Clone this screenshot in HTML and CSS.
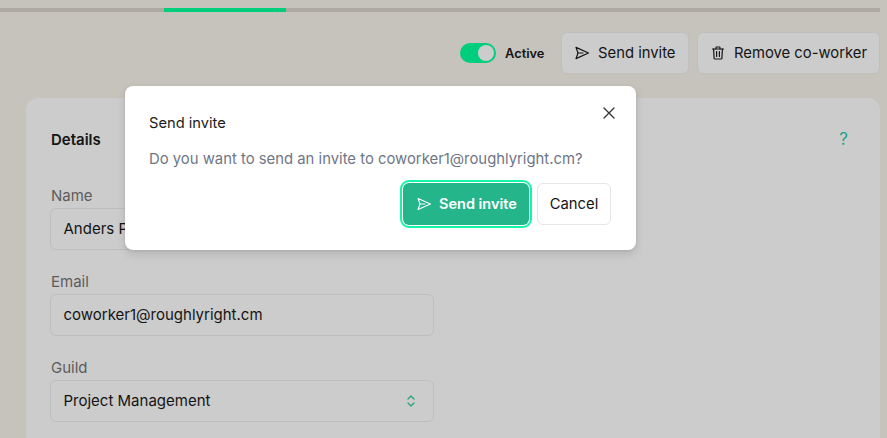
FILE: index.html
```html
<!DOCTYPE html>
<html lang="en">
<head>
<meta charset="utf-8">
<title>Co-worker</title>
<link rel="stylesheet" href="styles.css">
</head>
<body>
<main class="page">
  <div class="track"><div class="track-fill"></div></div>
  <div class="actions">
    <div class="toggle"><span class="knob"></span></div>
    <span class="toggle-label">Active</span>
    <button class="btn btn-send">
      <svg class="icon" viewBox="0 0 16 16" fill="none" stroke="currentColor" stroke-width="1.200" stroke-linejoin="round" stroke-linecap="round"><path d="M2 2.400 14.500 8 2 13.600 4 8Z"/><path d="M4 8H9"/></svg>
      Send invite
    </button>
    <button class="btn">
      <svg class="icon" viewBox="0 0 16 16" fill="none" stroke="currentColor" stroke-width="1.200" stroke-linejoin="round" stroke-linecap="round"><path d="M2.500 4H13.500"/><path d="M6 4V2.700C6 2.300 6.300 2 6.700 2H9.300C9.700 2 10 2.300 10 2.700V4"/><path d="M3.600 4 4.100 13.200C4.100 13.700 4.500 14 5 14H11C11.500 14 11.900 13.700 11.900 13.200L12.400 4"/><path d="M6.600 6.500V11.500M9.400 6.500V11.500"/></svg>
      Remove co-worker
    </button>
  </div>
  <section class="card">
    <div class="card-head">
      <h2 class="card-title">Details</h2>
      <span class="help">?</span>
    </div>
    <div class="field">
      <label class="label">Name</label>
      <div class="input">Anders Persson</div>
    </div>
    <div class="field">
      <label class="label">Email</label>
      <div class="input">coworker1@roughlyright.cm</div>
    </div>
    <div class="field">
      <label class="label">Guild</label>
      <div class="input select">
        Project Management
        <svg class="chevrons" viewBox="0 0 12 16" fill="none" stroke="currentColor" stroke-width="1.400" stroke-linecap="round" stroke-linejoin="round"><path d="M3 6 6 3 9 6"/><path d="M3 10 6 13 9 10"/></svg>
      </div>
    </div>
  </section>
</main>
<div class="dialog">
  <button class="close" aria-label="Close">
    <svg viewBox="0 0 14 14" fill="none" stroke="currentColor" stroke-width="1.300" stroke-linecap="round"><path d="M2 2 12 12M12 2 2 12"/></svg>
  </button>
  <h3 class="dialog-title">Send invite</h3>
  <p class="dialog-text">Do you want to send an invite to coworker1@roughlyright.cm?</p>
  <div class="dialog-actions">
    <button class="primary">
      <svg class="icon" viewBox="0 0 16 16" fill="none" stroke="currentColor" stroke-width="1.100" stroke-linejoin="round" stroke-linecap="round"><path d="M2 2.400 14.500 8 2 13.600 4 8Z"/><path d="M4 8H9"/></svg>
      Send invite
    </button>
    <button class="cancel">Cancel</button>
  </div>
</div>
</body>
</html>
```
FILE: styles.css
```css
* { box-sizing: border-box; }
html, body { margin: 0; height: 100%; }
body {
  background: #c6c3bc;
  font-family: Inter, "Liberation Sans", sans-serif;
  color: #141414;
  overflow: hidden;
  position: relative;
}
.page { padding: 8px 7px 0 0; }
.track { height: 4px; background: #aeaaa2; }
.track-fill { width: 122px; height: 4px; margin-left: 164px; background: #00ce7c; }
.actions {
  display: flex;
  align-items: center;
  justify-content: flex-end;
  margin-top: 20px;
  height: 42px;
}
.toggle {
  width: 36px;
  height: 20px;
  border-radius: 10px;
  background: #00ce7c;
  padding: 2px;
  display: flex;
  justify-content: flex-end;
}
.knob { width: 16px; height: 16px; border-radius: 50%; background: #cccccc; }
.toggle-label { width: 40px; font-size: 12.800px; font-weight: 600; margin: 0 16px 0 9px; white-space: nowrap; }
.btn {
  display: flex;
  align-items: center;
  gap: 8px;
  height: 42px;
  padding: 0 12px;
  margin-left: 8px;
  border: 1px solid #bfbfbf;
  border-radius: 6px;
  background: #cccccc;
  color: #141414;
  font: 14.800px/20px Inter, "Liberation Sans", sans-serif;
  white-space: nowrap;
}
.btn-send { width: 128px; margin-left: 0; }
.icon { width: 16px; height: 16px; flex: none; }
.card {
  margin: 24px 0 0 26px;
  padding: 30px 24px 0;
  background: #cccccc;
  border-radius: 12px 12px 0 0;
  height: 340px;
}
.card-head { display: flex; justify-content: space-between; align-items: center; height: 22px; }
.card-title { margin: 0; padding-left: 1px; font-size: 15px; font-weight: 600; }
.help { color: #23a088; font-size: 17px; margin-right: 8px; }
.field { width: 384px; margin-top: 22px; }
.card-head + .field { margin-top: 36px; }
.label { display: block; padding-left: 1px; font-size: 15px; line-height: 20px; color: #5c5c5c; margin-bottom: 2px; }
.input {
  height: 42px;
  border: 1px solid #bebebe;
  border-radius: 6px;
  padding: 0 12px 1px 12.500px;
  display: flex;
  align-items: center;
  justify-content: space-between;
  font-size: 15px;
  color: #141414;
}
.chevrons { width: 12px; height: 16px; color: #23a57f; margin-right: 4px; }
.dialog {
  position: absolute;
  left: 125px;
  top: 86px;
  width: 511px;
  height: 164px;
  background: #fff;
  border-radius: 8px;
  padding: 27px 25px 0 24px;
  box-shadow: 0 4px 10px rgba(0,0,0,.12), 0 1px 3px rgba(0,0,0,.08);
}
.close {
  position: absolute;
  right: 20px;
  top: 20px;
  width: 14px;
  height: 14px;
  padding: 0;
  border: 0;
  background: none;
  color: #333;
}
.close svg { display: block; }
.dialog-title { margin: 0; font-size: 14.700px; line-height: 20px; font-weight: 400; color: #1c1c1c; }
.dialog-text { margin: 16px 0 0; font-size: 14.850px; line-height: 20px; color: #6f7686; white-space: nowrap; }
.dialog-actions { display: flex; justify-content: flex-end; align-items: center; gap: 8px; margin-top: 14px; }
.primary {
  display: flex;
  align-items: center;
  gap: 7px;
  height: 42px;
  width: 126px;
  padding: 0 0 0 13px;
  border: 0;
  border-radius: 6px;
  background: #25b58a;
  color: #fff;
  font: 600 14.500px/20px Inter, "Liberation Sans", sans-serif;
  white-space: nowrap;
  box-shadow: 0 0 0 1px #fff, 0 0 0 3px #14f5a5;
}
.cancel {
  height: 42px;
  width: 74px;
  padding: 0;
  border: 1px solid #e6e6e6;
  border-radius: 6px;
  background: #fff;
  color: #141414;
  font: 14.800px/20px Inter, "Liberation Sans", sans-serif;
}
```
